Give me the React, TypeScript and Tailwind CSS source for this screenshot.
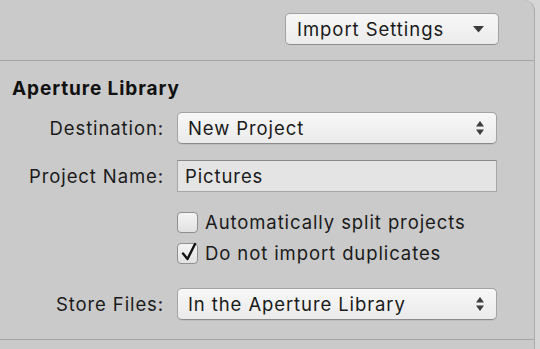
import React from "react";

const font = { fontFamily: "Inter, 'Noto Sans', sans-serif" };

function Updown() {
  return (
    <svg width="10" height="16" viewBox="0 0 10 16" className="shrink-0">
      <path d="M5 1 L9 6.5 L1 6.5 Z" fill="#3c3c3c" />
      <path d="M5 15 L9 9.5 L1 9.5 Z" fill="#3c3c3c" />
    </svg>
  );
}

function Popup({ label }: { label: string }) {
  return (
    <div className="flex h-[32px] w-[320px] items-center justify-between rounded-[5px] border border-[#a3a3a3] border-b-[#8c8c8c] bg-gradient-to-b from-[#f7f7f7] to-[#ebebeb] pl-[10px] pr-[11px] shadow-[0_1px_0_rgba(0,0,0,0.06)]">
      <span className="text-[18.5px] leading-none tracking-[0.9px] text-[#1a1a1a]">{label}</span>
      <Updown />
    </div>
  );
}

function Checkbox({ checked, label }: { checked?: boolean; label: string }) {
  return (
    <div className="flex items-center gap-[7px]">
      <div className="relative h-[21px] w-[21px] rounded-[4px] border border-[#8f8f8f] bg-gradient-to-b from-[#f4f4f4] to-[#e2e2e2]">
        {checked && (
          <svg
            width="20"
            height="22"
            viewBox="0 0 20 22"
            className="absolute left-[1px] top-[-3px]"
          >
            <path
              d="M4 12.5 L8.5 18 L16 3"
              fill="none"
              stroke="#111"
              strokeWidth="2.4"
              strokeLinecap="round"
              strokeLinejoin="round"
            />
          </svg>
        )}
      </div>
      <span className="text-[18.5px] leading-none tracking-[0.9px] text-[#1a1a1a]">{label}</span>
    </div>
  );
}

function Row({ label, children }: { label: string; children: React.ReactNode }) {
  return (
    <div className="flex items-center">
      <div className="w-[164px] text-right text-[18.5px] leading-none tracking-[0.9px] text-[#1a1a1a]">
        {label}
      </div>
      <div className="ml-[13px]">{children}</div>
    </div>
  );
}

export default function App() {
  return (
    <div className="h-[349px] w-[540px] overflow-hidden bg-[#d6d6d6]" style={font}>
      <div className="h-full w-[535px] rounded-tr-[11px] border-r border-[#a9a9a9] bg-[#cacaca]">
        <div className="flex h-[61px] justify-end border-b border-[#a6a6a6] pr-[35px] pt-[13px]">
          <div className="flex h-[32px] w-[214px] items-center justify-between rounded-[5px] border border-[#a3a3a3] border-b-[#8c8c8c] bg-gradient-to-b from-[#f7f7f7] to-[#ebebeb] pl-[11px] pr-[14px]">
            <span className="text-[18.5px] leading-none tracking-[0.95px] text-[#1a1a1a]">Import Settings</span>
            <svg width="11" height="7" viewBox="0 0 11 7">
              <path d="M0 0 L11 0 L5.5 6.5 Z" fill="#3c3c3c" />
            </svg>
          </div>
        </div>

        <div className="flex h-[279px] flex-col border-b border-[#a6a6a6]">
          <div className="pl-[12px] pt-[18px] text-[19px] font-bold leading-none tracking-[0.9px] text-[#111]">
            Aperture Library
          </div>
          <div className="mt-[14px]">
            <Row label="Destination:">
              <Popup label="New Project" />
            </Row>
          </div>
          <div className="mt-[16px]">
            <Row label="Project Name:">
              <div className="flex h-[32px] w-[320px] items-center border border-[#a6a6a6] border-t-[#8a8a8a] bg-[#e4e4e4] pl-[7px]">
                <span className="text-[18.5px] leading-none tracking-[0.9px] text-[#1a1a1a]">Pictures</span>
              </div>
            </Row>
          </div>
          <div className="ml-[177px] mt-[20px] flex flex-col gap-[10px]">
            <Checkbox label="Automatically split projects" />
            <Checkbox checked label="Do not import duplicates" />
          </div>
          <div className="mt-[24px]">
            <Row label="Store Files:">
              <Popup label="In the Aperture Library" />
            </Row>
          </div>
        </div>
      </div>
    </div>
  );
}
